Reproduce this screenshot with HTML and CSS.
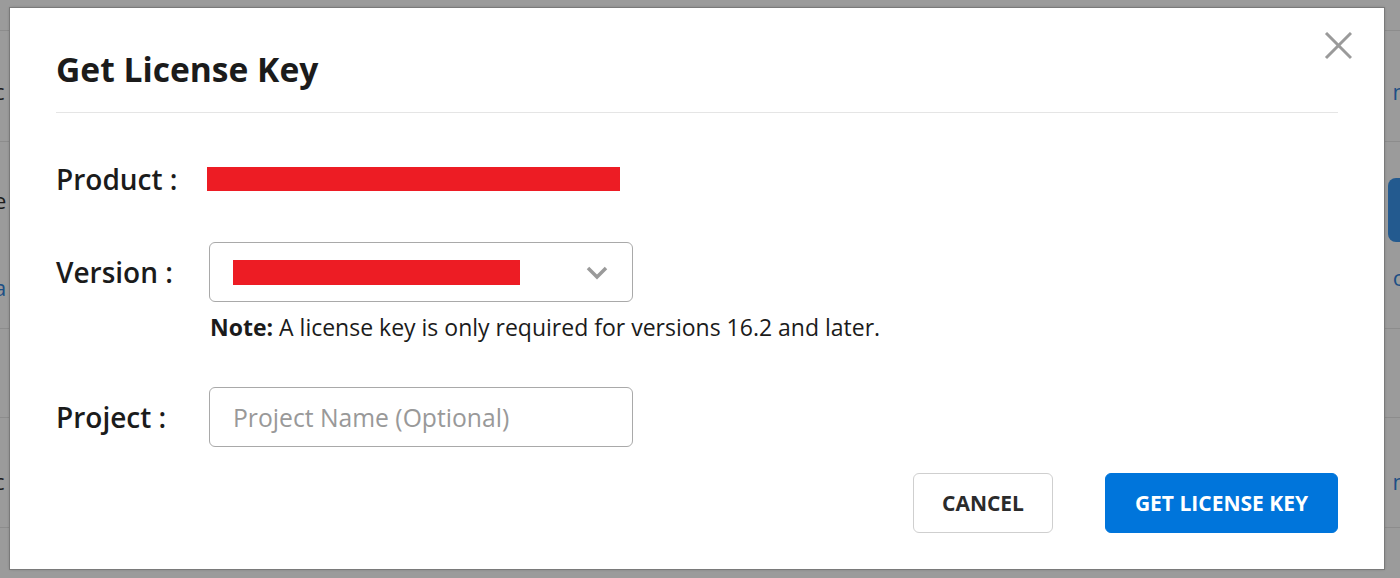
FILE: index.html
```html
<!DOCTYPE html>
<html lang="en">
<head>
<meta charset="utf-8">
<title>Get License Key</title>
<link rel="stylesheet" href="styles.css">
</head>
<body>
<div class="page">
  <div class="bg-row r1"></div>
  <div class="bg-row r2"><span class="bg-left">c</span><span class="bg-right link">n</span></div>
  <div class="bg-row r3">
    <div class="bg-col left-col"><span class="bg-left g-e">e</span><span class="bg-left link g-a">a</span></div>
    <div class="bg-col right-col"><span class="bg-btn"></span><span class="bg-right link g-o">o</span></div>
  </div>
  <div class="bg-row r4"></div>
  <div class="bg-row r5"><span class="bg-left">c</span><span class="bg-right link">n</span></div>
  <div class="bg-row r6"></div>
</div>

<div class="modal" role="dialog" aria-labelledby="mtitle">
  <button class="close" aria-label="Close">
    <svg width="28" height="28" viewBox="0 0 28 28"><path d="M2 1 L27 26 M27 1 L2 26" stroke="#9a9a9a" stroke-width="3" fill="none"/></svg>
  </button>
  <div class="modal-header">
    <h2 id="mtitle" class="title">Get License Key</h2>
  </div>
  <div class="modal-body">
    <div class="row product-row">
      <div class="label">Product :</div>
      <div class="value"><span class="redact redact-product"></span></div>
    </div>
    <div class="row version-row">
      <div class="label">Version :</div>
      <div class="select">
        <span class="redact redact-version"></span>
        <svg class="chev" width="22" height="14" viewBox="0 0 22 14"><path d="M2 2 L11 11 L20 2" stroke="#9a9a9a" stroke-width="3.5" fill="none"/></svg>
      </div>
    </div>
    <div class="note"><b>Note:</b> A license key is only required for versions 16.2 and later.</div>
    <div class="row project-row">
      <div class="label">Project :</div>
      <div class="input"><span class="placeholder">Project Name (Optional)</span></div>
    </div>
  </div>
  <div class="modal-footer">
    <button class="btn btn-cancel">CANCEL</button>
    <button class="btn btn-primary">GET LICENSE KEY</button>
  </div>
</div>
</body>
</html>
```

FILE: styles.css
```css
* { box-sizing: border-box; }
html, body { margin: 0; padding: 0; }
body {
  width: 1400px;
  height: 578px;
  overflow: hidden;
  background: #9b9b9b;
  font-family: "Open Sans", "Liberation Sans", sans-serif;
  color: #1b1b1b;
}
.page { width: 1400px; height: 578px; }
.bg-row {
  display: flex;
  justify-content: space-between;
  align-items: center;
  border-bottom: 1px solid #8c8c8c;
  font-size: 22px;
  line-height: 30px;
  color: #1c1c1c;
}
.r1 { height: 31px; }
.r2 { height: 111px; padding-top: 10px; }
.r3 { height: 187px; align-items: flex-start; }
.r4 { height: 89px; }
.r5 { height: 110px; padding-top: 16px; }
.r6 { height: 50px; border-bottom: none; }
.bg-col { display: flex; flex-direction: column; }
.left-col { align-items: flex-start; }
.right-col { align-items: flex-end; }
.g-e { margin-top: 43px; }
.g-a { margin-top: 57px; }
.bg-left { margin-left: -6px; }
.bg-right { margin-right: -6px; }
.link { color: #1d4f85; }
.bg-btn {
  display: block;
  width: 30px; height: 64px;
  background: #235a8f;
  border-radius: 8px;
  margin-right: -18px;
  margin-top: 36px;
}
.g-o { margin-top: 20px; }

.modal {
  position: absolute;
  left: 10px;
  top: 8px;
  width: 1374px;
  height: 561px;
  background: #fff;
  box-shadow: 0 0 0 1px #7a7a7a, 0 0 3px rgba(0,0,0,0.3);
  padding: 0 46px;
}
.close {
  position: absolute;
  right: 30px;
  top: 23px;
  width: 30px;
  height: 30px;
  border: none;
  background: none;
  padding: 0;
  cursor: pointer;
}
.close svg { display: block; }
.modal-header {
  padding-top: 41px;
  padding-bottom: 23px;
  border-bottom: 1px solid #e5e5e5;
}
.title {
  margin: 0;
  font-size: 33.6px;
  line-height: 40px;
  font-weight: 700;
  color: #1b1b1b;
}
.modal-body { padding-top: 37px; }
.row {
  display: flex;
  align-items: center;
}
.label {
  width: 153px;
  flex: none;
  font-size: 28px;
  line-height: 36px;
  font-weight: 600;
  color: #1b1b1b;
}
.product-row { height: 58px; }
.product-row .value { display: flex; align-items: center; margin-left: -2px; }
.redact { display: block; background: #ed1c24; }
.redact-product { width: 413px; height: 24px; }
.version-row { height: 60px; margin-top: 34px; }
.select, .input {
  width: 424px;
  height: 60px;
  border: 1px solid #a9a9a9;
  border-radius: 6px;
  display: flex;
  align-items: center;
  padding-left: 23px;
  position: relative;
}
.redact-version { width: 287px; height: 25px; }
.chev { position: absolute; right: 24px; top: 23px; }
.note {
  margin-top: 11px;
  margin-left: 154px;
  font-size: 23px;
  line-height: 28px;
  color: #1b1b1b;
}
.note b { font-weight: 700; }
.project-row { height: 60px; margin-top: 46px; }
.placeholder {
  font-size: 24.7px;
  color: #999;
}
.modal-footer {
  display: flex;
  justify-content: flex-end;
  gap: 52px;
  margin-top: 26px;
}
.btn {
  height: 60px;
  border-radius: 6px;
  font-family: "Open Sans", "Liberation Sans", sans-serif;
  font-size: 21px;
  font-weight: 700;
  cursor: pointer;
}
.btn-cancel {
  width: 140px;
  background: #fff;
  border: 1px solid #cfcfcf;
  color: #2b2b2b;
}
.btn-primary {
  width: 233px;
  background: #0075db;
  border: 1px solid #0075db;
  color: #fff;
}
```
